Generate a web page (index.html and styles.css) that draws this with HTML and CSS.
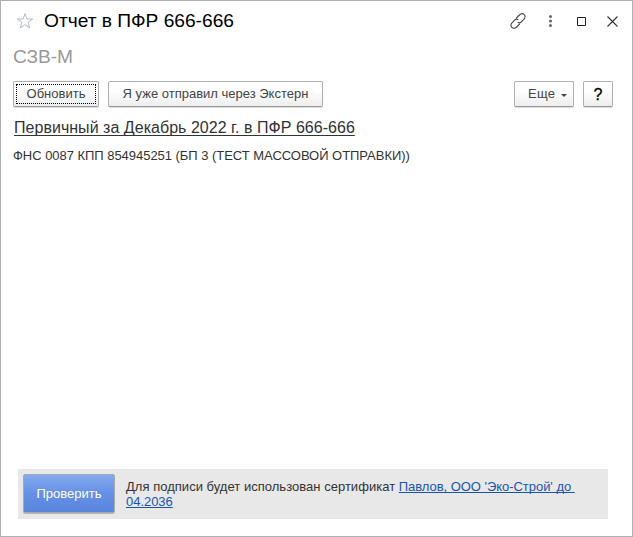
FILE: index.html
```html
<!DOCTYPE html>
<html lang="ru">
<head>
<meta charset="utf-8">
<title>Отчет в ПФР 666-666</title>
<link rel="stylesheet" href="styles.css">
</head>
<body>
<main class="window">
  <header class="titlebar">
    <svg class="star" width="18" height="18" viewBox="0 0 18 18"><path d="M9 1.6 10.9 7H16.7L12.1 10.4 13.8 16 9 12.7 4.2 16 5.9 10.4 1.3 7H7.1Z"/></svg>
    <h1 class="title">Отчет в ПФР 666-666</h1>
    <div class="tools">
      <svg class="link-icon" width="18" height="18" viewBox="0 0 18 18"><path d="M7.2 6.2 10.4 3C11.8 1.6 13.8 1.2 15.2 2.6 16.6 4 16.2 6 14.8 7.4L12.4 9.8C11.4 10.8 9.8 11 8.8 10.2M10.8 11.8 7.6 15C6.2 16.4 4.2 16.8 2.8 15.4 1.4 14 1.8 12 3.2 10.6L5.6 8.2C6.6 7.2 8.2 7 9.2 7.8"/></svg>
      <svg class="dots-icon" width="4" height="14" viewBox="0 0 4 14"><circle cx="2.5" cy="2.5" r="1.5"/><circle cx="2.5" cy="7" r="1.5"/><circle cx="2.5" cy="11.5" r="1.5"/></svg>
      <svg class="max-icon" width="9" height="9" viewBox="0 0 9 9"><path d="M.5.5h8v8h-8z"/></svg>
      <svg class="close-icon" width="11" height="11" viewBox="0 0 11 11"><path d="M.5.5l10 10M10.5.5l-10 10"/></svg>
    </div>
  </header>
  <h2 class="form-name">СЗВ-М</h2>
  <div class="commands">
    <button class="btn refresh">Обновить</button>
    <button class="btn sent">Я уже отправил через Экстерн</button>
    <button class="btn more">Еще<i class="caret"></i></button>
    <button class="btn help">?</button>
  </div>
  <div class="report"><a class="report-link">Первичный за Декабрь 2022 г. в ПФР 666-666</a></div>
  <p class="org">ФНС 0087 КПП 854945251 (БП 3 (ТЕСТ МАССОВОЙ ОТПРАВКИ))</p>
  <footer class="sign">
    <button class="check">Проверить</button>
    <p class="cert"><span class="cert-text">Для подписи будет использован сертификат </span><a class="cert-link">Павлов, ООО 'Эко-Строй' до&nbsp;<br>04.2036</a></p>
  </footer>
</main>
</body>
</html>
```
FILE: styles.css
```css
* { box-sizing: border-box; }
body { margin: 0; background: #fff; font: 13px/15px "Liberation Sans", Arial, sans-serif; color: #333; }
h1, h2, p { margin: 0; font-weight: 400; }
svg { fill: none; flex: none; }
.window { width: 633px; height: 537px; border: 1px solid #b0b0b0; display: flex; flex-direction: column; }
.titlebar { height: 40px; display: flex; align-items: center; padding: 0 14px 0 15px; }
.star { stroke: #b4bcc5; stroke-width: 1; }
.title { margin-left: 10px; font-size: 19.2px; line-height: 24px; letter-spacing: -.02px; color: #000; white-space: nowrap; }
.tools { margin-left: auto; display: flex; align-items: center; }
.link-icon { stroke: #444; stroke-width: 1.1; margin-right: 21px; }
.dots-icon { fill: #666; margin-right: 25px; }
.max-icon { stroke: #222; margin-right: 21px; }
.close-icon { stroke: #333; stroke-width: 1.1; }
.form-name { height: 40px; padding: 4px 12px 0; font-size: 19.2px; line-height: 24px; letter-spacing: -.1px; color: #999; }
.commands { display: flex; height: 26px; padding: 0 19px 0 12px; }
.btn { height: 26px; border: 1px solid #b0b0b0; border-bottom-color: #999; border-radius: 2px; padding: 0 0 1px; background: linear-gradient(#fff 35%, #ededed); box-shadow: 0 1px 0 #ddd; font: inherit; color: #444; white-space: nowrap; }
.refresh { width: 86px; outline: 1px dotted #000; outline-offset: -4px; }
.sent { width: 215px; margin-left: 9px; }
.more { width: 60px; margin-left: auto; display: flex; align-items: center; padding-left: 13px; letter-spacing: .25px; }
.caret { border: 3px solid transparent; border-top-color: #444; border-bottom: 0; margin: 3px 0 0 6px; }
.help { width: 30px; margin-left: 9px; color: #000; font-size: 16px; padding-top: 2px; -webkit-text-stroke: .3px #000; }
.report { padding: 11px 13px 0; font-size: 16px; line-height: 20px; letter-spacing: .03px; }
.report-link { text-decoration: underline; text-decoration-thickness: 1px; text-underline-offset: 2px; text-decoration-skip-ink: none; }
.org { padding: 10px 12px 0; letter-spacing: -.035px; }
.sign { width: 590px; height: 50px; margin: auto 0 17px 17px; padding: 5px; background: #e8e8e8; display: flex; }
.check { width: 92px; height: 39px; padding: 0; border: 1px solid #a9a9a9; border-radius: 2px; background: linear-gradient(#83aaf0, #6490e6 50%, #5985dc); box-shadow: 0 1px 0 #b5b5b5; color: #fff; font: inherit; }
.cert { margin: 5px 0 0 11px; white-space: nowrap; }
.cert-text { letter-spacing: .025px; }
.cert-link { color: #1a54b0; letter-spacing: -.04px; text-decoration: underline; text-decoration-thickness: 1px; text-underline-offset: 1px; text-decoration-skip-ink: none; }
```
